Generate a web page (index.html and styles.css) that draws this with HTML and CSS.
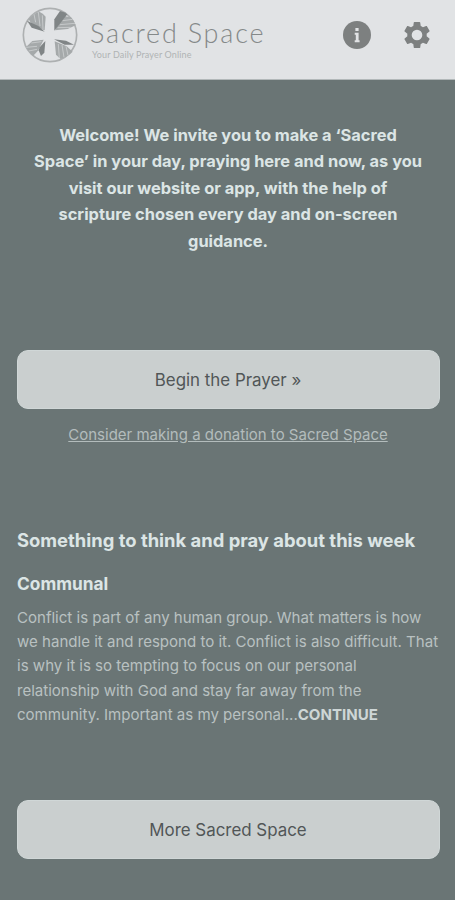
FILE: index.html
```
<!DOCTYPE html>
<html lang="en">
<head>
  <meta charset="UTF-8">
  <title>Sacred Space</title>
  <meta name="viewport" content="width=device-width, initial-scale=1">
  <link rel="stylesheet" href="styles.css">
</head>
<body>
  <header class="header">
    <a class="brand" href="#">
      <svg class="brand-mark" viewBox="66 21 168 168" aria-hidden="true">
        <circle class="ring" cx="150" cy="105" r="80"/>
        <path class="leaf" d="M134 91L137 50Q129 39 118 35Q98 42 86 58Q92 76 134 91Z"/>
        <path class="leaf" d="M165 91L174 72L195 49L213 52Q222 62 227 76L203 87Z"/>
        <path class="leaf" d="M131 119L97 123L78 141Q86 157 99 168L114 152Z"/>
        <path class="leaf" d="M164 124L168 164L182 177Q204 170 218 155L200 139Z"/>
        <path class="leaf-dark" d="M134 95L115 78L81 62L95 83Z"/>
        <path class="leaf-dark" d="M163 92L163 58L180 33Q193 36 202 43L176 76Z"/>
        <path class="leaf-dark" d="M136 123L119 142L116 151L123 168L133 158Z"/>
        <path class="leaf-dark" d="M162 118L198 122L222 134L194 134Z"/>
        <path class="vein" d="M102 43L107 67M115 36L120 78M127 46L129 87M180 74L225 70M188 62L218 58M173 83L212 82M79 142L111 139M86 153L111 148M94 129L124 125M175 132L178 174M186 135L192 172M198 139L204 166"/>
      </svg>
      <span class="brand-text">
        <span class="brand-name">Sacred Space</span>
        <span class="brand-tagline">Your Daily Prayer Online</span>
      </span>
    </a>
    <nav class="header-nav">
      <a class="nav-icon" href="#" aria-label="Information">
        <svg viewBox="0 0 28 28">
          <circle cx="14" cy="14" r="14"/>
          <path class="info-i" d="M12.4 7h3.2v2.9h-3.2zM11.7 11.8h3.9v7.4h1v2h-4.9v-2h1.1v-5.4h-1.1z"/>
        </svg>
      </a>
      <a class="nav-icon" href="#" aria-label="Settings">
        <svg viewBox="1.2 1.2 21.6 21.6">
          <path d="M19.43 12.98c.04-.32.07-.64.07-.98s-.03-.66-.07-.98l2.11-1.65c.19-.15.24-.42.12-.64l-2-3.46c-.12-.22-.39-.3-.61-.22l-2.49 1c-.52-.4-1.08-.73-1.69-.98l-.38-2.65C14.46 2.18 14.25 2 14 2h-4c-.25 0-.46.18-.49.42l-.38 2.65c-.61.25-1.17.59-1.69.98l-2.49-1c-.23-.09-.49 0-.61.22l-2 3.46c-.13.22-.07.49.12.64l2.11 1.65c-.04.32-.07.65-.07.98s.03.66.07.98l-2.11 1.65c-.19.15-.24.42-.12.64l2 3.46c.12.22.39.3.61.22l2.49-1c.52.4 1.08.73 1.69.98l.38 2.65c.03.24.24.42.49.42h4c.25 0 .46-.18.49-.42l.38-2.65c.61-.25 1.17-.59 1.69-.98l2.49 1c.23.09.49 0 .61-.22l2-3.46c.12-.22.07-.49-.12-.64l-2.11-1.65zM12 16.1a4.1 4.1 0 1 1 0-8.2 4.1 4.1 0 0 1 0 8.2z"/>
        </svg>
      </a>
    </nav>
  </header>
  <main class="content">
    <p class="welcome">Welcome! We invite you to make a ‘Sacred<br>Space’ in your day, praying here and now, as you<br>visit our website or app, with the help of<br>scripture chosen every day and on-screen<br>guidance.</p>
    <a class="btn" href="#">Begin the Prayer »</a>
    <a class="donate" href="#">Consider making a donation to Sacred Space</a>
    <section class="reflection">
      <h2>Something to think and pray about this week</h2>
      <h3>Communal</h3>
      <p>Conflict is part of any human group. What matters is how<br>we handle it and respond to it. Conflict is also difficult. That<br>is why it is so tempting to focus on our personal<br>relationship with God and stay far away from the<br>community. Important as my personal...<a class="continue" href="#">CONTINUE</a></p>
    </section>
    <a class="btn" href="#">More Sacred Space</a>
  </main>
</body>
</html>
```
FILE: styles.css
```
:root {
  --page: #6a7575;
  --bar: #e1e3e5;
  --button: #cacfcf;
  --icon: #7d8080;
}
* {
  box-sizing: border-box;
}
body {
  margin: 0;
  min-height: 100vh;
  background: var(--page);
  color: #dce5e5;
  font-family: Inter, "Liberation Sans", sans-serif;
}
a {
  color: inherit;
  text-decoration: none;
}
.header {
  display: flex;
  justify-content: space-between;
  height: 80px;
  padding: 0 24px 0 22px;
  background: var(--bar);
  border-bottom: 1px solid #b2b8b9;
}
.brand {
  display: flex;
  gap: 12px;
  padding-top: 7px;
}
.brand-mark {
  width: 56px;
  height: 56px;
}
.ring {
  fill: none;
  stroke: #adb0b1;
  stroke-width: 5;
}
.leaf {
  fill: #a5a9aa;
}
.leaf-dark {
  fill: #808586;
}
.vein {
  fill: none;
  stroke: #c6c9ca;
  stroke-width: 3;
}
.brand-text {
  display: flex;
  flex-direction: column;
  padding-top: 9px;
  white-space: nowrap;
}
.brand-name {
  color: #858989;
  font-family: Lato, sans-serif;
  font-size: 27px;
  font-weight: 300;
  line-height: 33px;
  letter-spacing: 1.8px;
}
.brand-tagline {
  padding-left: 2px;
  color: #b0b3b4;
  font-family: Lato, sans-serif;
  font-size: 9px;
  line-height: 11px;
  letter-spacing: 0.15px;
}
.header-nav {
  display: flex;
  gap: 32px;
  padding-top: 21px;
}
.nav-icon svg {
  display: block;
  width: 28px;
  height: 28px;
  fill: var(--icon);
}
.nav-icon .info-i {
  fill: var(--bar);
}
.content {
  display: flex;
  flex-direction: column;
  padding: 42px 15.5px 40px 16.5px;
  white-space: nowrap;
}
.welcome {
  margin: 0 0 96px;
  text-align: center;
  font-size: 16.4px;
  font-weight: 700;
  line-height: 26.4px;
}
.btn {
  display: flex;
  align-items: center;
  justify-content: center;
  height: 59px;
  border: 1px solid #d0d7d7;
  border-radius: 11px;
  background: var(--button);
  color: #515657;
  font-size: 16.9px;
}
.donate {
  align-self: center;
  margin-top: 16px;
  color: #b3bcbc;
  font-size: 15px;
  line-height: 20px;
  text-decoration: underline;
}
.reflection {
  margin: 82px 0 73px 0.5px;
}
.reflection h2 {
  margin: 0 0 19px;
  font-size: 18.4px;
  font-weight: 700;
  line-height: 26px;
}
.reflection h3 {
  margin: 0 0 10px;
  font-size: 17.3px;
  font-weight: 700;
  line-height: 24px;
}
.reflection p {
  margin: 0;
  color: #b9c1c1;
  font-size: 15.05px;
  line-height: 24.2px;
}
.continue {
  color: #ced6d6;
  font-weight: 700;
}
```
